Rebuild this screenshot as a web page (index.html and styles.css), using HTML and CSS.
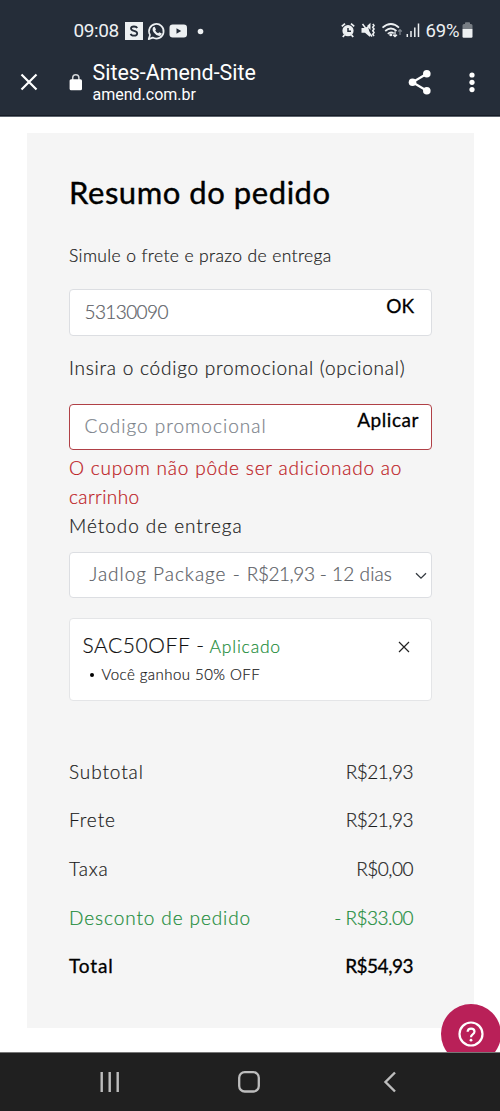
FILE: index.html
```html
<!DOCTYPE html>
<html lang="pt-BR">
<head>
<meta charset="utf-8">
<title>Sites-Amend-Site</title>
<link rel="stylesheet" href="styles.css">
</head>
<body>
<div class="screen">
  <header class="top">
    <div class="status">
      <span class="clock">09:08</span>
      <svg class="notifs" width="84" height="20" viewBox="0 0 84 20">
        <rect x="1" y="1" width="18" height="18" fill="#edf0f2"/>
        <path d="M13.200 7Q12.500 5.500 10 5.500Q7 5.500 7 7.600Q7 9.300 10 9.900Q13.200 10.500 13.200 12.500Q13.200 14.700 10 14.700Q7.200 14.700 6.600 12.900" fill="none" stroke="#252d39" stroke-width="1.800"/>
        <path d="M24.700 18.100L26 13.900A7.300 7.300 0 1 1 28.700 16.600Z" fill="none" stroke="#edf0f2" stroke-width="1.700" stroke-linejoin="round"/>
        <path d="M29.200 6.200l1.500-.5 1.300 2.700-.8 1.100q1 2 2.900 2.800l1.200-1.100 2.500 1.300q0 2.300-2.500 2.400-3.500-.3-5.500-3.300-2.100-3.200-.6-5.400Z" fill="#edf0f2"/>
        <rect x="45.500" y="3.500" width="17.500" height="13" rx="3.200" fill="#edf0f2"/>
        <path d="M52.500 7.200v5.600l4.700-2.800Z" fill="#252d39"/>
        <circle cx="76.500" cy="10.500" r="2.800" fill="#edf0f2"/>
      </svg>
      <svg class="signals" width="82" height="20" viewBox="0 0 82 20">
        <g fill="none" stroke="#edf0f2">
          <circle cx="8" cy="10.700" r="4.800" fill="#edf0f2" stroke-width="1.600"/>
          <path d="M1.800 6.400L5 3.600M11 3.600L14.200 6.400M4.500 15L2.800 17M11.500 15L13.200 17" stroke-width="1.800"/>
          <path d="M8 8v3.200h3" stroke="#252d39" stroke-width="1.500"/>
          <path d="M22.500 4L32 16.500" stroke-width="1.500"/>
          <path d="M32.800 4l1.200 1.500-1.200 1.800 1.200 1.700-1.200 1.800 1.200 1.700-1.200 1.700 1.200 1.800" stroke-width="1.600"/>
          <path d="M42.500 7.700Q51 .3 59 7.700M45.200 11Q51 6 56.500 11M47.800 13.800Q51 11 53.700 13.400" stroke-width="1.700"/>
          <path d="M55 11.500v5M53 14.700l2 2 2-2" stroke-width="1.300"/>
          <path d="M60 15V9.800M58.200 11.500l1.800-1.800 1.800 1.800" stroke="#7b828b" stroke-width="1.300"/>
          <path d="M67.300 14v3M71 11v6M74.800 7.500V17M78.500 3.500V17" stroke-width="1.500"/>
        </g>
        <path d="M21.500 8h3l3.500-1.600 2.500 9.600-.8.800-4.700-4h-3.500ZM27 6l3.500-3.300v7.300Z" fill="#edf0f2"/>
        <circle cx="50.800" cy="14.800" r="1.500" fill="#edf0f2"/>
      </svg>
      <span class="percent">69%</span>
      <svg class="battery" width="12" height="18" viewBox="0 0 12 18">
        <path d="M3 2V1q0-.8.800-.8h3.400q.8 0 .8.800v1h1q1.500 0 1.500 1.500V7H.5V3.500Q.500 2 2 2Z" fill="#777d84"/>
        <path d="M.5 7h10v7.500q0 1.200-1.200 1.200H1.700q-1.200 0-1.200-1.200Z" fill="#edf0f2"/>
      </svg>
    </div>
    <div class="bar">
      <svg class="close" width="18" height="18" viewBox="0 0 18 18"><path d="M1.500 1.500l15 15M16.500 1.500l-15 15" stroke="#fff" stroke-width="2.200"/></svg>
      <svg class="lock" width="14" height="18" viewBox="0 0 14 18">
        <path d="M3.700 8V4.800a3.100 3.100 0 0 1 6.200 0V8" fill="none" stroke="#d5d8db" stroke-width="1.500"/>
        <rect x=".6" y="6.200" width="12.400" height="11" rx="1.500" fill="#fff"/>
      </svg>
      <div class="site">
        <div class="site-name">Sites-Amend-Site</div>
        <div class="site-url">amend.com.br</div>
      </div>
      <svg class="share" width="24" height="26" viewBox="0 0 24 26">
        <path d="M18.800 4.700L4.500 13.200 18.800 21.700" fill="none" stroke="#fff" stroke-width="2.200"/>
        <g fill="#fff"><circle cx="18.800" cy="4.700" r="3.800"/><circle cx="4.500" cy="13.200" r="3.800"/><circle cx="18.800" cy="21.700" r="3.800"/></g>
      </svg>
      <svg class="more" width="6" height="22" viewBox="0 0 6 22"><g fill="#fff"><circle cx="3" cy="4" r="2.600"/><circle cx="3" cy="11.300" r="2.600"/><circle cx="3" cy="18.600" r="2.600"/></g></svg>
    </div>
  </header>

  <main class="page">
    <section class="summary">
      <h1 class="title">Resumo do pedido</h1>
      <p class="shipping-label">Simule o frete e prazo de entrega</p>
      <div class="field">
        <span class="zip">53130090</span>
        <span class="action ok">OK</span>
      </div>
      <p class="coupon-label">Insira o código promocional (opcional)</p>
      <div class="field invalid">
        <span class="placeholder">Codigo promocional</span>
        <span class="action apply">Aplicar</span>
      </div>
      <p class="error">O cupom não pôde ser adicionado ao <span class="error-end">carrinho</span></p>
      <p class="method-label">Método de entrega</p>
      <div class="field select">
        <span class="method">Jadlog Package - <span class="price">R$21,93</span><span class="days"> - 12 dias</span></span>
        <svg width="12" height="8" viewBox="0 0 12 8"><path d="M1 1.200l5 5 5-5" fill="none" stroke="#343a40" stroke-width="1.300"/></svg>
      </div>
      <div class="coupon">
        <div class="coupon-head">
          <span class="code">SAC50OFF -</span>
          <span class="applied">Aplicado</span>
          <svg width="12" height="12" viewBox="0 0 12 12"><path d="M1 1l10 10M11 1L1 11" stroke="#222" stroke-width="1.200"/></svg>
        </div>
        <div class="benefit"><i class="dot"></i><span>Você ganhou 50% OFF</span></div>
      </div>
      <div class="totals">
        <div class="row"><span class="name">Subtotal</span><span class="amount">R$21,93</span></div>
        <div class="row"><span class="name">Frete</span><span class="amount">R$21,93</span></div>
        <div class="row"><span class="name">Taxa</span><span class="amount">R$0,00</span></div>
        <div class="row discount"><span class="name">Desconto de pedido</span><span class="amount">- R$33.00</span></div>
        <div class="row total"><span class="name">Total</span><span class="amount">R$54,93</span></div>
      </div>
    </section>
    <div class="help">
      <svg width="26" height="26" viewBox="0 0 26 26">
        <g fill="none" stroke="#fff" stroke-width="2.200"><circle cx="13" cy="13" r="11.500"/><path d="M9.600 10.800Q9.800 7.600 13.100 7.600T16.500 10.500Q16.500 12 14.700 13.300T13 16.200"/></g>
        <circle cx="13" cy="19.200" r="1.400" fill="#fff"/>
      </svg>
    </div>
  </main>

  <nav class="nav">
    <svg width="20" height="22" viewBox="0 0 20 22"><path d="M1.700 1v20M9.700 1v20M17.700 1v20" stroke="#bdbdbd" stroke-width="2.400"/></svg>
    <svg class="home" width="22" height="22" viewBox="0 0 22 22"><rect x="1.200" y="1.200" width="19.600" height="19.300" rx="5.500" fill="none" stroke="#bdbdbd" stroke-width="2.300"/></svg>
    <svg class="back" width="14" height="22" viewBox="0 0 14 22"><path d="M12 1.500L2.500 11l9.500 9.500" fill="none" stroke="#bdbdbd" stroke-width="2.400"/></svg>
  </nav>
</div>
</body>
</html>
```
FILE: styles.css
```css
* { box-sizing: border-box; }
body { margin: 0; background: #fff; }
svg { display: block; flex: none; }
h1, p { margin: 0; }

.screen {
  width: 500px;
  height: 1111px;
  display: flex;
  flex-direction: column;
  overflow: hidden;
  font-family: Lato, "Liberation Sans", sans-serif;
  font-weight: 300;
  font-size: 19px;
  line-height: 29px;
  color: #1c1c1c;
  white-space: nowrap;
}

/* Browser chrome */
.top {
  height: 117px;
  flex: none;
  background: #252d39;
  border-bottom: 1px solid #5d646e;
  box-shadow: inset 0 -1px #151b25;
  color: #fff;
  font-family: Roboto, sans-serif;
  font-weight: 400;
}
.status { display: flex; align-items: center; height: 60px; padding: 1px 26px 0 73.500px; color: #edf0f2; }
.clock { width: 50.500px; font-size: 19px; letter-spacing: -.4px; }
.signals { margin-left: auto; margin-top: -1px; }
.percent { width: 36.500px; font-size: 18.500px; letter-spacing: -.2px; margin-left: 4px; padding-top: 1px; }
.battery { margin-top: 1px; }
.bar { display: flex; align-items: center; height: 44px; padding: 0 25px 0 20px; }
.close, .lock, .share, .more { margin-top: -1px; }
.lock { margin-left: 31px; }
.site { margin-left: 9.500px; padding-top: 1px; }
.site-name { font-size: 21.400px; line-height: 25px; }
.site-url { font-size: 16px; line-height: 20px; }
.share { margin-left: auto; }
.more { margin-left: 37px; }

/* Order summary */
.page { position: relative; flex: 1; overflow: hidden; padding: 16px 26.500px 0 27px; }
.summary { height: 895px; background: #f5f5f5; padding: 38px 41.500px 0; -webkit-text-stroke: .2px currentColor; }
.title { font-size: 31px; line-height: 42px; font-weight: 400; letter-spacing: .55px; color: #000; -webkit-text-stroke: .4px #000; padding-left: .5px; }
.shipping-label { margin-top: 28px; padding-left: .5px; font-size: 17.500px; line-height: 29px; letter-spacing: .38px; }
.field {
  display: flex;
  justify-content: space-between;
  height: 46.500px;
  margin-top: 19px;
  padding: 7px 17px 0 15px;
  background: #fff;
  border: 1px solid #dcdee2;
  border-radius: 4px;
  color: #5c6066;
}
.zip { letter-spacing: -.6px; }
.invalid { border-color: #b04046; margin-top: 22px; height: 46px; padding: 6px 12px 0 15px; }
.placeholder { color: #7b828a; letter-spacing: 1px; }
.action { color: #000; font-weight: 400; -webkit-text-stroke: .3px #000; margin-top: -6px; }
.apply { letter-spacing: .55px; margin-top: -5.500px; }
.coupon-label { margin-top: 17px; padding-left: .5px; letter-spacing: .76px; }
.error { margin-top: 3px; padding-left: .5px; color: #bd2024; white-space: normal; letter-spacing: .8px; }
.error-end { letter-spacing: .4px; }
.method-label { padding-left: .5px; letter-spacing: .95px; }
.select { margin-top: 12px; padding: 6px 4px 0 20px; }
.select svg { margin-top: 13px; }
.method { letter-spacing: .98px; }
.price { letter-spacing: -.45px; }
.days { letter-spacing: .1px; }
.coupon { height: 83px; margin-top: 20px; padding: 11px 21px 0 13px; background: #fff; border: 1px solid #e4e5e7; border-radius: 4px; }
.coupon-head { display: flex; align-items: baseline; gap: 5px; }
.coupon-head svg { margin-left: auto; }
.code { font-size: 21px; color: #111; letter-spacing: .57px; }
.applied { font-size: 17.500px; color: #218c3b; letter-spacing: .8px; }
.benefit { display: flex; align-items: center; gap: 8px; padding-left: 7px; font-size: 15px; line-height: 26px; letter-spacing: .45px; }
.dot { width: 4px; height: 4px; border-radius: 50%; background: #000; margin-top: 2px; }
.totals { margin-top: 46px; padding-right: 19px; }
.row { display: flex; justify-content: space-between; align-items: center; height: 48.600px; }
.name { padding-left: .5px; letter-spacing: .9px; }
.amount { letter-spacing: -.5px; }
.discount { color: #218c3b; }
.total { color: #000; font-weight: 400; -webkit-text-stroke: .3px #000; }

.help {
  position: absolute;
  left: 440.500px;
  top: 887px;
  width: 60px;
  height: 60px;
  border-radius: 50%;
  background: #b92058;
  display: flex;
  align-items: center;
  justify-content: center;
}

/* System navigation */
.nav { height: 59px; flex: none; background: #202020; border-top: 1px solid #777; display: flex; align-items: center; padding: 0 0 0 100px; }
.home { margin-left: 118px; }
.back { margin-left: 122.500px; }
```
